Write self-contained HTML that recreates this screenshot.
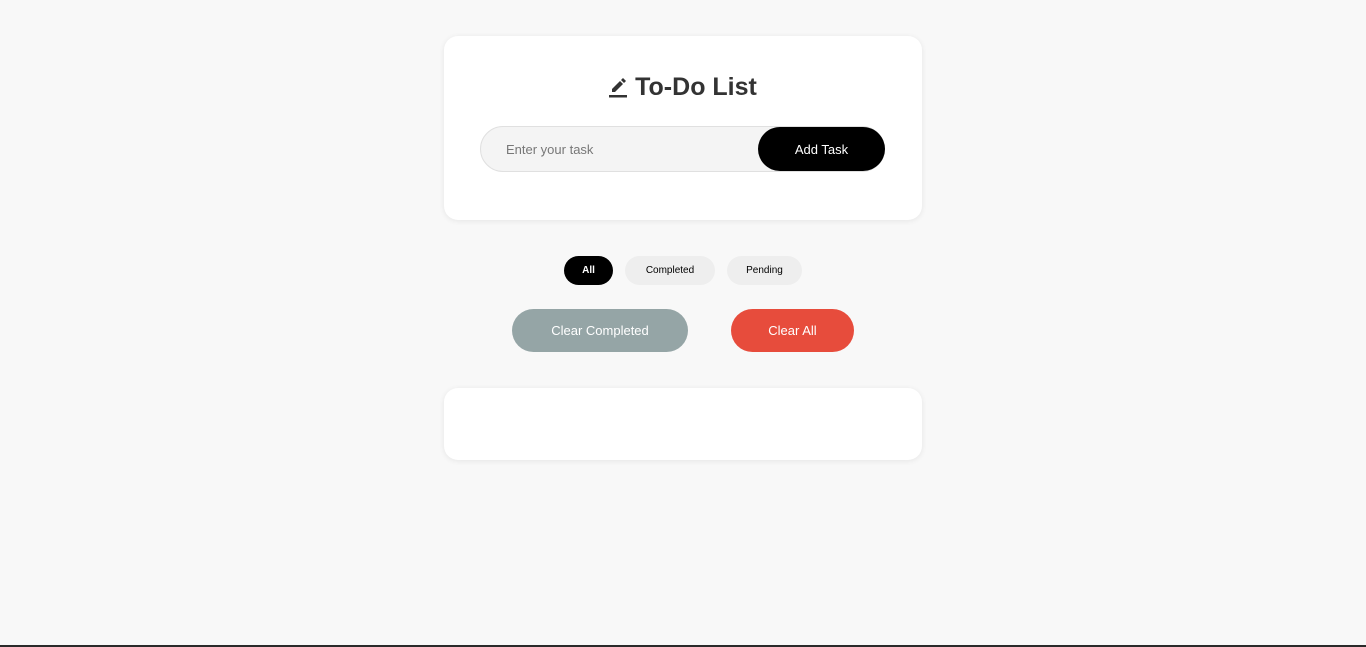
<!DOCTYPE html>
<html><head><style>
body{margin:0;width:1366px;height:647px;background:#f8f8f8;font-family:"Liberation Sans",sans-serif;position:relative;overflow:hidden}
.card{position:absolute;left:444px;width:478px;background:#fff;border-radius:14px;box-shadow:0 1px 6px rgba(0,0,0,.08)}
.abs{position:absolute;box-sizing:border-box;display:flex;align-items:center;justify-content:center}
</style></head><body>
<div class="card" style="top:36px;height:184px"></div>
<div class="abs" style="left:444px;width:478px;top:70px;height:34px;font-size:25px;font-weight:bold;color:#333">
<svg width="18" height="22" viewBox="0 0 18 22" style="margin-right:8px"><path d="M3 16 L3 13 L11 5 L14 8 L6 16 Z" fill="#333"/><path d="M12 4 L14 2 L17 5 L15 7 Z" fill="#333"/><rect x="0" y="19" width="18" height="2.5" fill="#333"/></svg>To-Do List</div>
<div class="abs" style="left:480px;top:126px;width:405px;height:46px;border:1px solid #e0e0e0;background:#f4f4f4;border-radius:23px;justify-content:flex-start;padding-left:25px;font-size:13px;color:#777">Enter your task</div>
<div class="abs" style="left:758px;top:127px;width:127px;height:44px;background:#000;color:#fff;border-radius:22px;font-size:13px">Add Task</div>
<div class="abs" style="left:564px;top:256px;width:49px;height:29px;background:#000;color:#fff;border-radius:15px;font-size:10px;font-weight:bold">All</div>
<div class="abs" style="left:625px;top:256px;width:90px;height:29px;background:#eee;color:#000;border-radius:15px;font-size:10px">Completed</div>
<div class="abs" style="left:727px;top:256px;width:75px;height:29px;background:#eee;color:#000;border-radius:15px;font-size:10px">Pending</div>
<div class="abs" style="left:512px;top:309px;width:176px;height:43px;background:#95a5a6;color:#fff;border-radius:22px;font-size:13px">Clear Completed</div>
<div class="abs" style="left:731px;top:309px;width:123px;height:43px;background:#e74c3c;color:#fff;border-radius:22px;font-size:13px">Clear All</div>
<div class="card" style="top:388px;height:72px"></div>
<div style="position:absolute;left:0;top:645px;width:1366px;height:2px;background:#2a2a2a"></div>
</body></html>
